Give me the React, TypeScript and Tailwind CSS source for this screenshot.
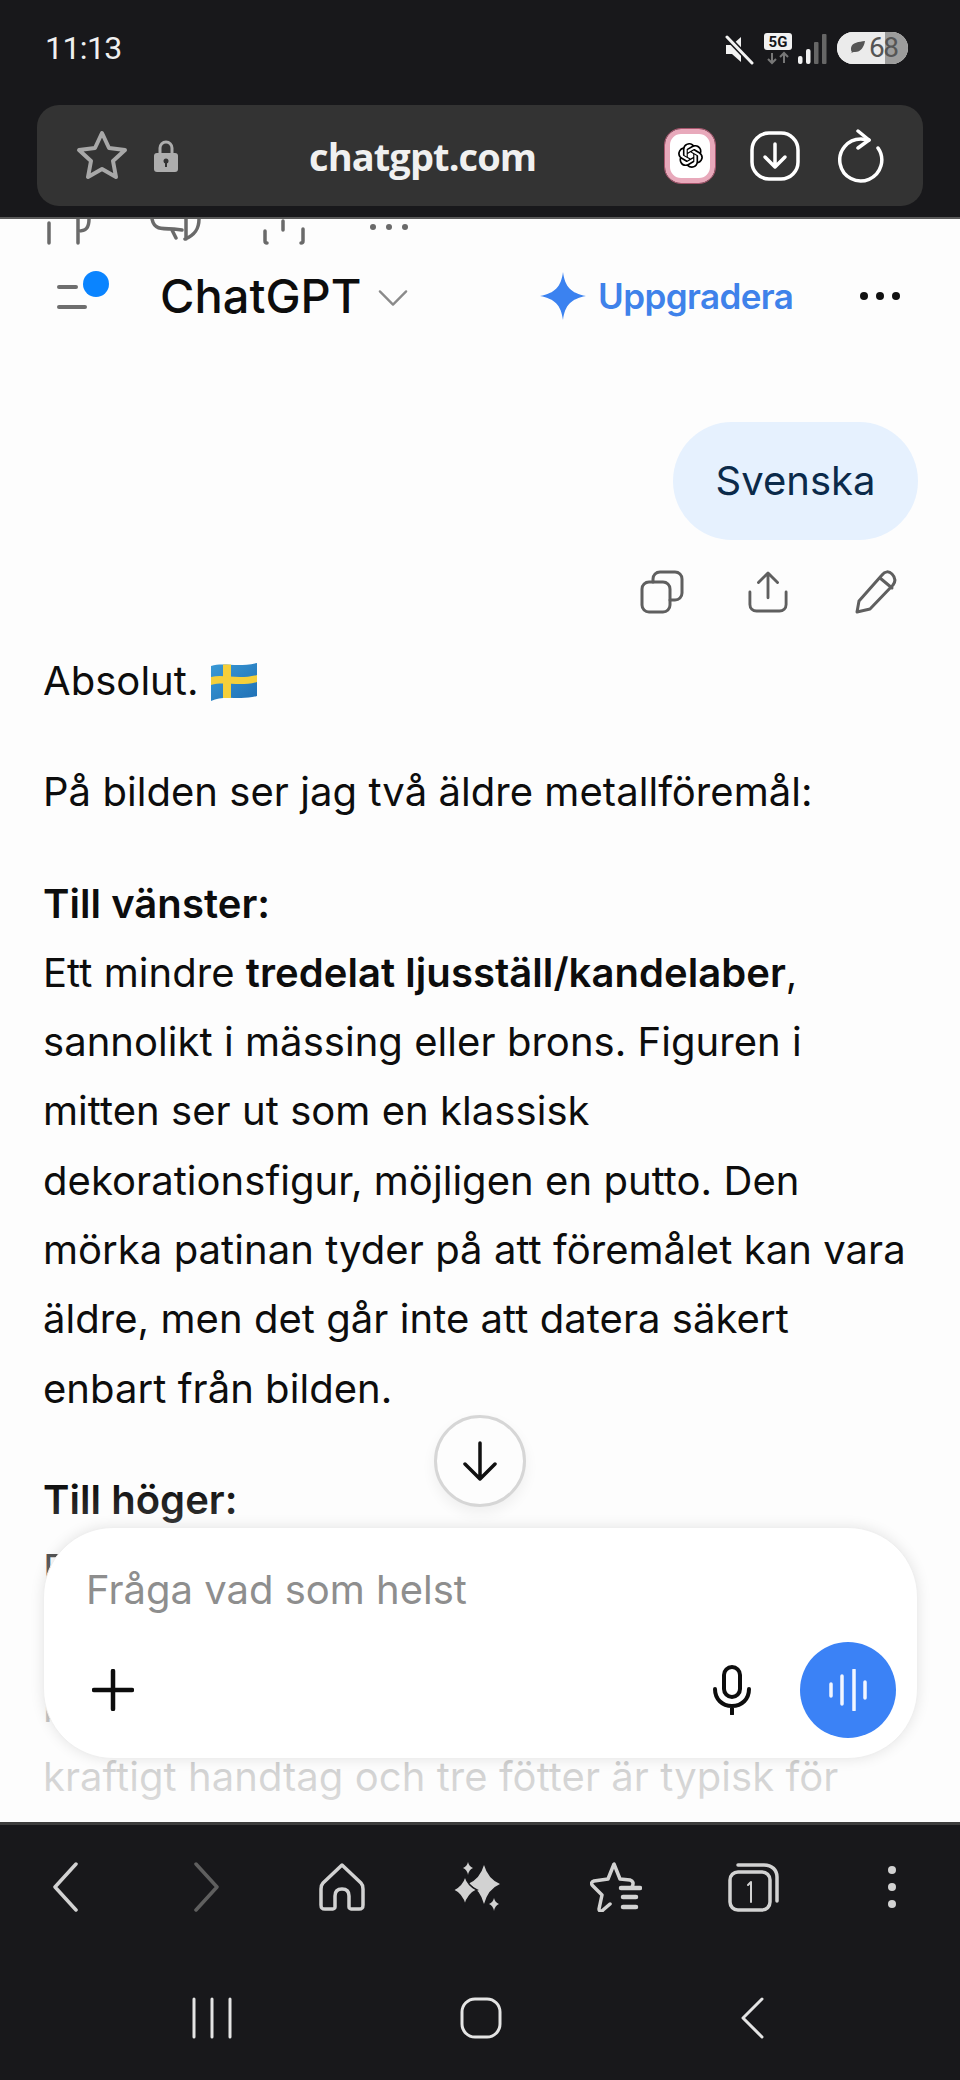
import { SiOpenai } from "react-icons/si";

const Flag = () => (
  <svg width="48" height="40" viewBox="0 0 48 40" className="inline-block align-[-7px] ml-[11px]">
    <defs>
      <linearGradient id="fb" x1="0" y1="0" x2="1" y2="1">
        <stop offset="0" stopColor="#3a9ad6" />
        <stop offset="1" stopColor="#1f6fb5" />
      </linearGradient>
    </defs>
    <path d="M1 4C14 0 26 6 47 1V34C30 39 14 32 1 39Z" fill="url(#fb)" />
    <path d="M13 2.500h8V36h-8Z" fill="#f5cf3a" />
    <path d="M1 15C14 12 28 18 47 13v7C30 25 14 19 1 23Z" fill="#f5cf3a" />
  </svg>
);

const Star = ({ className }: { className?: string }) => (
  <svg viewBox="0 0 52 52" className={className} fill="none" stroke="currentColor" strokeWidth="4" strokeLinejoin="round">
    <path d="M26 3l7 15 16 2-12 11 3 16-14-8-14 8 3-16L3 20l16-2Z" />
  </svg>
);

function StatusBar() {
  return (
    <div className="h-[105px] flex items-start justify-between pl-[45px] pr-[52px] pt-[32px]">
      <span className="text-[32px] leading-[32px] text-[#f0f0f0] tracking-[-0.6px] font-['Roboto',sans-serif]">11:13</span>
      <div className="flex items-start">
        <svg width="32" height="30" viewBox="0 0 32 30" className="mt-[3px]">
          <path d="M3 10h6l9-8v25l-9-8H3Z" fill="#f2f2f2" />
          <path d="M4 2l25 26" stroke="#18181b" strokeWidth="6" />
          <path d="M4 2l25 26" stroke="#f2f2f2" strokeWidth="3" strokeLinecap="round" />
        </svg>
        <svg width="30" height="32" viewBox="0 0 30 32" className="ml-[8px] mt-[1px]">
          <rect x="1" y="0" width="28" height="17" rx="3" fill="#f2f2f2" />
          <text x="15" y="14" textAnchor="middle" fontSize="15" fontWeight="700" fill="#18181b" fontFamily="Roboto, sans-serif">5G</text>
          <path d="M9 20v10M5 26l4 4 4-4M21 30V20M17 24l4-4 4 4" stroke="#777" strokeWidth="2" fill="none" />
        </svg>
        <svg width="29" height="30" viewBox="0 0 29 30" className="ml-[5px] mt-[2px]">
          <rect x="0" y="22" width="4.5" height="8" rx="2" fill="#f2f2f2" />
          <rect x="8" y="15" width="4.5" height="15" rx="2" fill="#f2f2f2" />
          <rect x="16" y="8" width="4.5" height="22" rx="1" fill="#666" />
          <rect x="24" y="0" width="4.5" height="30" rx="1" fill="#666" />
        </svg>
        <div className="ml-[10px] w-[71px] h-[32px] rounded-full overflow-hidden flex bg-[#ebebeb] relative">
          <div className="w-[48px] bg-[#ebebeb]" />
          <div className="flex-1 bg-[#9c9c9c]" />
          <div className="absolute inset-0 flex items-center pl-[11px]">
            <svg width="18" height="16" viewBox="0 0 18 16">
              <path d="M1 15C4 12 5 12 7 12c6 0 9-5 10-11C11 2 4 2 3 8c0 2 0 3 1 4" fill="#555" />
            </svg>
            <span className="ml-[3px] text-[28px] leading-[32px] tracking-[-1.500px] text-[#555] font-['Roboto',sans-serif]">68</span>
          </div>
        </div>
      </div>
    </div>
  );
}

function AddressBar() {
  return (
    <div className="mx-[37px] h-[101px] rounded-[22px] bg-[#333333] flex items-center relative">
      <Star className="w-[52px] h-[52px] ml-[39px] text-[#a8a8a8]" />
      <svg width="26" height="33" viewBox="0 0 26 33" className="ml-[25px] mt-[2px]">
        <path d="M7 14V8a6 6 0 0 1 12 0v6" fill="none" stroke="#adadad" strokeWidth="3" />
        <rect x="1" y="13" width="24" height="19" rx="3" fill="#adadad" />
        <circle cx="13" cy="21" r="2.5" fill="#333" />
        <rect x="12" y="22" width="2" height="5" fill="#333" />
      </svg>
      <span className="ml-[130px] w-[226px] text-center text-[38px] leading-[50px] font-bold tracking-[-0.9px] text-[#f0f0f0] font-['Open_Sans',sans-serif]">chatgpt.com</span>
      <div className="ml-[130px] w-[50px] h-[54px] rounded-[16px] bg-white border-[5px] border-[#e8a9bb] outline outline-[1px] outline-[#a8566e] flex items-center justify-center">
        <SiOpenai className="w-[25px] h-[25px] text-black" />
      </div>
      <svg width="50" height="50" viewBox="0 0 50 50" className="ml-[35px]" fill="none" stroke="#fff" strokeWidth="3.5" strokeLinecap="round" strokeLinejoin="round">
        <rect x="2" y="2" width="46" height="46" rx="17" />
        <path d="M25 13v23M15 26l10 10 10-10" />
      </svg>
      <svg width="48" height="54" viewBox="0 0 48 54" className="ml-[38px]" fill="none" stroke="#fff" strokeWidth="3.5" strokeLinecap="round" strokeLinejoin="round">
        <path d="M40 19A21 21 0 1 1 23 10L31 11" />
        <path d="M20 2l11 9-11 8" />
      </svg>
    </div>
  );
}

function Slivers() {
  return (
    <svg width="960" height="26" viewBox="0 0 960 26" className="block" fill="none" stroke="#6a6a6a" strokeWidth="3.5" strokeLinecap="round">
      <path d="M49 4v20M78 0v24M78 12c8 0 11-3 11-12" />
      <path d="M152 0c2 10 8 10 22 10l8 1M172 11l4 8M186 0v20M199 0c0 10-4 16-14 20" />
      <path d="M265 12v10q0 2 2 2M283 2v9M303 10v12q0 2-2 2" />
      <circle cx="373" cy="8" r="3" fill="#6a6a6a" stroke="none" />
      <circle cx="389" cy="8" r="3" fill="#6a6a6a" stroke="none" />
      <circle cx="405" cy="8" r="3" fill="#6a6a6a" stroke="none" />
    </svg>
  );
}

function ChatHeader() {
  return (
    <div className="h-[102px] flex items-center">
      <div className="ml-[57px] w-[53px] h-[50px] relative shrink-0">
        <div className="absolute left-0 top-[14px] w-[21px] h-[4px] rounded-full bg-[#6e6e6e]" />
        <div className="absolute left-0 top-[34px] w-[30px] h-[4px] rounded-full bg-[#6e6e6e]" />
        <div className="absolute left-[26px] top-0 w-[26px] h-[26px] rounded-full bg-[#0a84ff]" />
      </div>
      <span className="ml-[50px] w-[200px] text-[47px] leading-[60px] font-medium text-[#0d0d0d] tracking-[0px] whitespace-nowrap">ChatGPT</span>
      <svg width="30" height="18" viewBox="0 0 32 18" className="ml-[18px] mt-[4px]" fill="none" stroke="#8a8a8a" strokeWidth="2.5" strokeLinecap="round" strokeLinejoin="round">
        <path d="M2 2l14 14L30 2" />
      </svg>
      <svg width="46" height="48" viewBox="0 0 46 48" className="ml-[132px]">
        <path d="M23 0c2 15 8 21 23 24-15 3-21 9-23 24-2-15-8-21-23-24 15-3 21-9 23-24Z" fill="#3b82f0" />
      </svg>
      <span className="ml-[12px] w-[192px] text-[35px] leading-[50px] font-semibold text-[#3f82ea] tracking-[-0.6px] whitespace-nowrap">Uppgradera</span>
      <div className="ml-[70px] flex gap-[8px]">
        <div className="w-[8px] h-[8px] rounded-full bg-[#111]" />
        <div className="w-[8px] h-[8px] rounded-full bg-[#111]" />
        <div className="w-[8px] h-[8px] rounded-full bg-[#111]" />
      </div>
    </div>
  );
}

function Actions() {
  const p = { fill: "none", stroke: "#5f5f5f", strokeWidth: 3, strokeLinecap: "round" as const, strokeLinejoin: "round" as const };
  return (
    <div className="flex justify-end pr-[63px] mt-[30px] h-[44px]">
      <svg width="44" height="44" viewBox="0 0 44 44" {...p}>
        <rect x="2" y="12" width="28" height="30" rx="7" />
        <path d="M13 12V9c0-4 3-7 7-7h15c4 0 7 3 7 7v14c0 4-3 7-7 7h-5" />
      </svg>
      <svg width="40" height="44" viewBox="0 0 42 44" className="ml-[64px]" {...p}>
        <path d="M21 28V3M11 12L21 2l10 10" />
        <path d="M2 22v13c0 4 3 7 7 7h24c4 0 7-3 7-7V22" />
      </svg>
      <svg width="42" height="44" viewBox="0 0 42 44" className="ml-[67px]" {...p}>
        <path d="M2 42l2-11L27 5c3-4 7-4 10-1s4 7 1 11L15 39Z" />
        <path d="M25 8l12 10" />
      </svg>
    </div>
  );
}

function Composer() {
  return (
    <div className="absolute left-[43px] top-[1308px] w-[875px] h-[232px] rounded-[70px] bg-white shadow-[0_0_14px_rgba(0,0,0,0.10)] border border-[#efefef] flex flex-col">
      <div className="pl-[42px] pt-[37px] text-[40px] leading-[50px] text-[#8e8e8e]">Fråga vad som helst</div>
      <div className="flex items-center mt-[27px]">
        <svg width="42" height="42" viewBox="0 0 42 42" className="ml-[48px]" fill="none" stroke="#0d0d0d" strokeWidth="4.500" strokeLinecap="round">
          <path d="M21 2v38M2 21h38" />
        </svg>
        <svg width="40" height="50" viewBox="0 0 40 50" className="ml-[578px]" fill="none" stroke="#0d0d0d" strokeWidth="4" strokeLinecap="round">
          <rect x="12" y="2" width="16" height="30" rx="8" />
          <path d="M3 24c0 10 7 17 17 17s17-7 17-17M20 41v8" />
        </svg>
        <div className="ml-[48px] w-[96px] h-[96px] rounded-full bg-[#3b82f6] flex items-center justify-center">
          <svg width="40" height="42" viewBox="0 0 40 42" stroke="#f2f6ff" strokeWidth="3.5" strokeLinecap="round">
            <path d="M3 15v12M14 7v28M26 1v40M37 13v16" />
          </svg>
        </div>
      </div>
    </div>
  );
}

function Conversation() {
  return (
    <main className="relative h-[1605px] overflow-hidden bg-[#fdfdfd] border-t-[2px] border-[#5a5a5a]">
      <Slivers />
      <ChatHeader />
      <div className="flex justify-end pr-[42px] mt-[75px]">
        <div className="w-[245px] h-[118px] rounded-[59px] bg-[#e6f1fe] flex items-center justify-center text-[40px] text-[#0b2a4a]">Svenska</div>
      </div>
      <Actions />
      <article className="px-[43px] mt-[32px] text-[40px] leading-[69.3px] text-[#0d0d0d] tracking-[0.05px]">
        <p className="whitespace-nowrap">Absolut.<Flag /></p>
        <p className="mt-[42px] whitespace-nowrap">På bilden ser jag två äldre metallföremål:</p>
        <p className="mt-[42px]"><b className="font-semibold">Till vänster:</b></p>
        <p className="whitespace-nowrap">Ett mindre <b className="font-semibold">tredelat ljusställ/kandelaber</b>,</p>
        <p className="whitespace-nowrap">sannolikt i mässing eller brons. Figuren i</p>
        <p className="whitespace-nowrap">mitten ser ut som en klassisk</p>
        <p className="whitespace-nowrap">dekorationsfigur, möjligen en putto. Den</p>
        <p className="whitespace-nowrap">mörka patinan tyder på att föremålet kan vara</p>
        <p className="whitespace-nowrap">äldre, men det går inte att datera säkert</p>
        <p className="whitespace-nowrap">enbart från bilden.</p>
        <p className="mt-[42px]"><b className="font-semibold">Till höger:</b></p>
        <p className="whitespace-nowrap">En större kanna i tenn eller liknande metall.</p>
        <p className="whitespace-nowrap">Formen med lock och pip tillsammans med</p>
        <p className="whitespace-nowrap">bastant utförande, en rundad kropp,</p>
        <p className="whitespace-nowrap">kraftigt handtag och tre fötter är typisk för</p>
      </article>
      <div className="absolute inset-x-0 bottom-0 h-[340px] bg-gradient-to-b from-[#fdfdfd00] via-[#fdfdfdb0] to-[#fdfdfde0]" />
      <button className="absolute left-[434px] top-[1196px] w-[92px] h-[92px] rounded-full bg-[#fdfdfd] border-[3px] border-[#d6d6d6] shadow-[0_6px_14px_rgba(0,0,0,0.06)] flex items-center justify-center">
        <svg width="36" height="40" viewBox="0 0 36 40" fill="none" stroke="#111" strokeWidth="3.500" strokeLinecap="round" strokeLinejoin="round">
          <path d="M18 2v36M3 23l15 15 15-15" />
        </svg>
      </button>
      <Composer />
    </main>
  );
}

function BrowserNav() {
  const p = { fill: "none", stroke: "#d2d2d2", strokeWidth: 3.5, strokeLinecap: "round" as const, strokeLinejoin: "round" as const };
  return (
    <div className="h-[48px] mt-[38px] flex items-center relative">
      <svg width="26" height="50" viewBox="0 0 26 50" className="ml-[52px]" {...p}>
        <path d="M24 2L3 25l21 23" />
      </svg>
      <svg width="26" height="50" viewBox="0 0 26 50" className="ml-[116px]" {...p} stroke="#5f5f5f">
        <path d="M2 2l21 23L2 48" />
      </svg>
      <svg width="46" height="48" viewBox="0 0 46 48" className="ml-[99px]" {...p}>
        <path d="M23 2L4 20c-2 2-2 3-2 6v16c0 3 1 4 4 4h8c1 0 2-1 2-2V33c0-5 3-7 7-7s7 2 7 7v11c0 1 1 2 2 2h8c3 0 4-1 4-4V26c0-3 0-4-2-6Z" />
      </svg>
      <svg width="50" height="50" viewBox="0 0 50 50" className="ml-[88px]" fill="#d2d2d2">
        <path d="M31 3Q35 17 47 22 35 27 31 42 27 27 15 22 27 17 31 3Z" />
        <path d="M12 14Q15 24 24 28 15 32 12 43 9 32 0 28 9 24 12 14Z" stroke="#18181b" strokeWidth="1.500" />
        <path d="M15 0Q16 4.500 20 6 16 7.500 15 13 14 7.500 10 6 14 4.500 15 0Z" />
        <path d="M41 36Q42 40.500 46 42 42 43.500 41 49 40 43.500 36 42 40 40.500 41 36Z" />
      </svg>
      <svg width="52" height="50" viewBox="0 0 52 50" className="ml-[87px]" {...p}>
        <path d="M42 25c2-4 1-6-2-7l-10-1L24 2l-6 15-14 2c-3 1-3 3-1 5l9 9-3 14c0 2 2 3 4 1l7-6" />
        <path d="M31 26h19M33 35h13M33 45h13" strokeWidth="4.500" />
      </svg>
      <svg width="52" height="50" viewBox="0 0 52 50" className="ml-[86px]" {...p}>
        <rect x="2" y="10" width="40" height="38" rx="8" />
        <path d="M10 3h26c8 0 13 5 13 12v24" />
        <path d="M23 20v20M23 20l-3 3" strokeWidth="2" />
      </svg>
      <div className="ml-[108px] flex flex-col gap-[9px]">
        <div className="w-[8px] h-[8px] rounded-full bg-[#d2d2d2]" />
        <div className="w-[8px] h-[8px] rounded-full bg-[#d2d2d2]" />
        <div className="w-[8px] h-[8px] rounded-full bg-[#d2d2d2]" />
      </div>
    </div>
  );
}

function SystemNav() {
  const p = { fill: "none", stroke: "#e4e4e4", strokeWidth: 3, strokeLinecap: "round" as const, strokeLinejoin: "round" as const };
  return (
    <div className="mt-[86px] h-[42px] flex items-center">
      <svg width="40" height="42" viewBox="0 0 40 42" className="ml-[192px]" {...p}>
        <path d="M2 2v38M20 2v38M38 2v38" />
      </svg>
      <svg width="42" height="42" viewBox="0 0 42 42" className="ml-[228px]" {...p}>
        <rect x="2" y="2" width="38" height="38" rx="13" />
      </svg>
      <svg width="24" height="42" viewBox="0 0 24 42" className="ml-[238px]" {...p}>
        <path d="M22 2L3 21l19 19" />
      </svg>
    </div>
  );
}

export default function App() {
  return (
    <div className="w-[960px] h-[2080px] overflow-hidden bg-[#18181b] font-['Inter',sans-serif] flex flex-col">
      <header className="h-[217px] shrink-0">
        <StatusBar />
        <AddressBar />
      </header>
      <Conversation />
      <div className="border-t-[3px] border-[#3d3d3d] flex-1">
        <BrowserNav />
        <SystemNav />
      </div>
    </div>
  );
}
